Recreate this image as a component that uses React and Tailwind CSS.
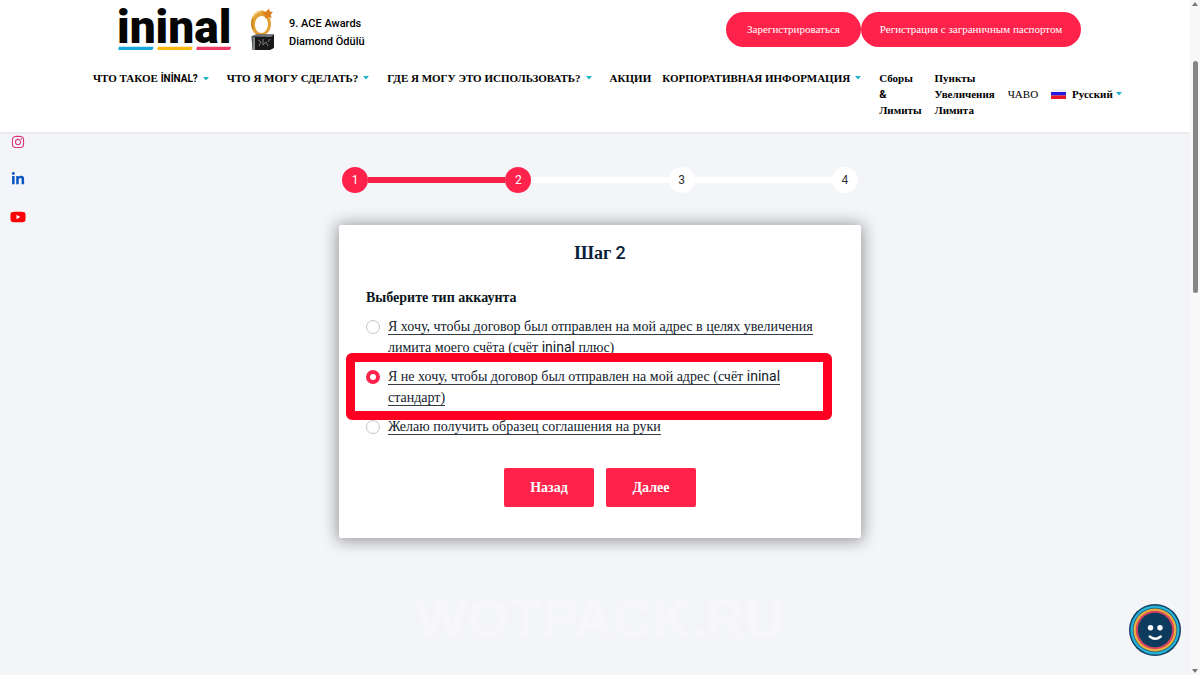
import { useState } from "react";
import { FaInstagram, FaLinkedinIn, FaYoutube } from "react-icons/fa6";

function Latin({ children }) {
  return <span className="font-['Roboto','Liberation_Sans',sans-serif] leading-none">{children}</span>;
}

function Caret() {
  return (
    <svg viewBox="0 0 6 4" className="h-1 w-1.5 shrink-0" aria-hidden="true">
      <path d="M0 0h6L3 3.4z" fill="#1fb5c9" />
    </svg>
  );
}

function Logo() {
  return (
    <svg viewBox="0 0 114 46" className="h-[46px] w-[114px] overflow-visible" role="img" aria-label="ininal">
      <text x="-1" y="37" fontFamily="Roboto, sans-serif" fontWeight="900" fontSize="46" fill="#050505">
        ininal
      </text>
      <path d="M1 40.800h34.500q-.2 3.200-2 3.200H.5q-.5-2 .5-3.200z" fill="#1ba8dc" />
      <path d="M40 40.800h34.500q-.2 3.200-2 3.200H39.500q-.5-2 .5-3.200z" fill="#f9b90f" />
      <path d="M79 40.800h34q-.2 3.200-2 3.200H78.500q-.5-2 .5-3.200z" fill="#ee3e68" />
    </svg>
  );
}

function Trophy() {
  return (
    <svg viewBox="0 0 26 44" className="h-11 w-[26px]" aria-hidden="true">
      <path
        fillRule="evenodd"
        d="M11 2.500C4.500 3 1 9 1 15.500S4.500 27.500 11 27.500 21 22 21 16 17.500 2 11 2.500zM11.500 8c3.800 0 6.500 3.500 6.500 8s-2.700 9-6.700 9S5 21 5 16.500 7.700 8 11.500 8z"
        fill="#e3a035"
      />
      <path d="M3 9q2.500-5 8-5.300" fill="none" stroke="#f7d487" strokeWidth="1.200" />
      <path d="M3 21Q.8 16 2.600 11" fill="none" stroke="#b87718" strokeWidth="1" />
      <path d="M19 .5l.8 3 3.200.5-2.200 2.600.9 3.400-3.400-1.200-3.200 1.700-.3-3.400L12 5.200l3.600-1.300z" fill="#dc7f1e" />
      <path d="M1.500 28.500l4.500-2h18v13.500l-4 2H2.500z" fill="#17191b" />
      <path d="M1.500 28.500l4.500-2h18l-3 2.500z" fill="#70757a" />
      <path d="M2.500 42V29l2.500.3V42z" fill="#85898b" />
      <path d="M8 32l3 2-2 4M13 31v6l3-3 2 4M20 31l-2 3" fill="none" stroke="#8e8478" strokeWidth=".9" />
    </svg>
  );
}

function RussianFlag() {
  return (
    <svg viewBox="0 0 15 10" className="h-2.5 w-[15px] shrink-0" aria-hidden="true">
      <path d="M0 0h15v10H0z" fill="#f0f0f3" />
      <path d="M0 3h15v3.500H0z" fill="#2417e0" />
      <path d="M0 6.500h15V10H0z" fill="#ee1427" />
    </svg>
  );
}

function NavItem({ children, menu }) {
  return (
    <li className={menu ? "pr-[7px]" : ""}>
      <a href="#" className="flex items-center gap-[5px] whitespace-nowrap">
        <span>{children}</span>
        {menu && <Caret />}
      </a>
    </li>
  );
}

function Header() {
  return (
    <header className="h-[134px] border-b-2 border-[#e9ebef] bg-white text-black">
      <div className="flex h-[58px] items-start justify-between pr-[119px] pl-[118px]">
        <div className="flex pt-1.5">
          <a href="#">
            <Logo />
          </a>
          <div className="ml-[18px] pt-0.5">
            <Trophy />
          </div>
          <p className="ml-[13px] pt-[9px] font-['Roboto',sans-serif] text-[11px] leading-[18px] font-medium">
            9. ACE Awards
            <br />
            Diamond Ödülü
          </p>
        </div>
        <div className="flex pt-3 text-[11px] text-white">
          <button type="button" className="h-[35px] w-[135px] rounded-full bg-[#ff234c]">
            Зарегистрироваться
          </button>
          <button type="button" className="h-[35px] w-[220px] rounded-full bg-[#ff234c]">
            Регистрация с заграничным паспортом
          </button>
        </div>
      </div>
      <nav className="flex gap-[11px] pt-3 pl-[93px] text-[11px] leading-[16px] font-bold">
        <ul className="flex gap-[11px]">
          <NavItem menu>
            ЧТО ТАКОЕ <span className="text-[10px]"><Latin>İNİNAL?</Latin></span>
          </NavItem>
          <NavItem menu>ЧТО Я МОГУ СДЕЛАТЬ?</NavItem>
          <NavItem menu>ГДЕ Я МОГУ ЭТО ИСПОЛЬЗОВАТЬ?</NavItem>
          <NavItem>АКЦИИ</NavItem>
          <NavItem menu>КОРПОРАТИВНАЯ ИНФОРМАЦИЯ</NavItem>
        </ul>
        <ul className="flex gap-[13px]">
          <NavItem>
            Сборы
            <br />
            <Latin>&amp;</Latin>
            <br />
            Лимиты
          </NavItem>
          <NavItem>
            Пункты
            <br />
            Увеличения
            <br />
            Лимита
          </NavItem>
          <li className="self-center font-normal">
            <a href="#">ЧАВО</a>
          </li>
          <li className="self-center">
            <button type="button" className="flex items-center font-bold">
              <RussianFlag />
              <span className="mr-[3px] ml-1.5">Русский</span>
              <Caret />
            </button>
          </li>
        </ul>
      </nav>
    </header>
  );
}

function Stepper({ current }) {
  return (
    <ol className="flex items-center font-['Roboto',sans-serif] text-[12px]">
      {[1, 2, 3, 4].map((n) => (
        <li key={n} className={n > 1 ? "flex flex-1 items-center" : "flex items-center"}>
          {n > 1 && <span className={n <= current ? "h-1.5 flex-1 bg-[#f81f49]" : "h-1.5 flex-1 bg-white"} />}
          <span
            className={
              n <= current
                ? "flex size-[26px] items-center justify-center rounded-full bg-[#ff234c] text-white"
                : "flex size-[26px] items-center justify-center rounded-full bg-white text-[#333]"
            }
          >
            {n}
          </span>
        </li>
      ))}
    </ol>
  );
}

function Option({ id, checked, onChange, framed, children }) {
  return (
    <div className="relative flex gap-2">
      <input
        id={id}
        type="radio"
        name="account"
        checked={checked}
        onChange={onChange}
        className="mt-1 size-3.5 shrink-0 appearance-none rounded-full border border-[#c4c7cb] bg-white checked:border-[4px] checked:border-[#ff234c]"
      />
      <label htmlFor={id} className="text-[14px] leading-[21px] text-[#12202b]">
        <span className="border-b border-[#333c44]">{children}</span>
      </label>
      {framed && (
        <div className="pointer-events-none absolute -top-[13px] right-0.5 -bottom-3 -left-5 rounded-md border-[9px] border-[#ff0022]" />
      )}
    </div>
  );
}

function AccountForm() {
  const [account, setAccount] = useState("standard");
  return (
    <form
      onSubmit={(e) => e.preventDefault()}
      className="rounded-xs bg-white px-[27px] pt-4 pb-[31px] shadow-[0_1px_16px_2px_rgba(0,0,0,0.38)]"
    >
      <h1 className="text-center text-[18px] leading-6 font-bold text-[#0a2239]">
        Шаг <span className="font-medium"><Latin>2</Latin></span>
      </h1>
      <fieldset className="mt-[22px]">
        <legend className="mb-2 text-[14px] leading-[21px] font-bold text-[#0b1620]">Выберите тип аккаунта</legend>
        <div className="flex flex-col gap-2">
          <Option id="plus" checked={account === "plus"} onChange={() => setAccount("plus")}>
            Я хочу, чтобы договор был отправлен на мой адрес в целях увеличения лимита моего счёта (счёт{" "}
            <Latin>ininal</Latin> плюс)
          </Option>
          <Option id="standard" framed checked={account === "standard"} onChange={() => setAccount("standard")}>
            Я не хочу, чтобы договор был отправлен на мой адрес (счёт <Latin>ininal</Latin> стандарт)
          </Option>
          <Option id="hand" checked={account === "hand"} onChange={() => setAccount("hand")}>
            Желаю получить образец соглашения на руки
          </Option>
        </div>
      </fieldset>
      <div className="mt-[31px] flex justify-center gap-3 text-[14px] font-bold text-white">
        <button type="button" className="h-[39px] w-[90px] rounded-xs bg-[#ff234c]">
          Назад
        </button>
        <button type="submit" className="h-[39px] w-[90px] rounded-xs bg-[#ff234c]">
          Далее
        </button>
      </div>
    </form>
  );
}

function ChatFace() {
  return (
    <svg viewBox="0 0 52 52" className="size-[52px]" aria-hidden="true">
      <circle cx="26" cy="26" r="26" fill="#123f62" />
      <circle cx="26" cy="26" r="24.500" fill="#27b3d8" />
      <circle cx="26" cy="26" r="22.300" fill="#1b5f80" />
      <circle cx="26" cy="26" r="21.500" fill="#e9b13c" />
      <circle cx="26" cy="26" r="19.300" fill="#d6455f" />
      <circle cx="26" cy="26" r="17.200" fill="#0d3b5e" />
      <circle cx="21.500" cy="23.800" r="2.700" fill="#fff" />
      <circle cx="31" cy="23.800" r="2.700" fill="#fff" />
      <path d="M20.800 32.500q5.500 4.500 11 0" fill="none" stroke="#fff" strokeWidth="2.400" strokeLinecap="round" />
    </svg>
  );
}

export default function App() {
  return (
    <div className="relative min-h-screen overflow-hidden bg-[#f3f5f9] font-['Liberation_Serif','Times_New_Roman',serif]">
      <Header />
      <aside className="absolute top-[135px] left-[10px] flex flex-col items-center gap-[23px]">
        <a href="#" aria-label="Instagram">
          <FaInstagram className="size-3.5 text-[#d9337a]" />
        </a>
        <a href="#" aria-label="LinkedIn">
          <FaLinkedinIn className="size-3.5 text-[#0b57c0]" />
        </a>
        <a href="#" aria-label="YouTube">
          <FaYoutube className="size-4 text-[#fb0007]" />
        </a>
      </aside>
      <main className="mx-auto flex max-w-[522px] flex-col gap-8 pt-[33px]">
        <div className="px-[3px]">
          <Stepper current={2} />
        </div>
        <AccountForm />
      </main>
      <p className="mt-[50px] text-center font-['Liberation_Sans',sans-serif] text-[54px] leading-[60px] font-bold text-[#f7f7fb] select-none">
        WOTPACK.RU
      </p>
      <button type="button" aria-label="Чат" className="absolute right-[19px] bottom-[19px] rounded-full">
        <ChatFace />
      </button>
      <div className="absolute inset-y-0 right-0 flex w-2.5 flex-col items-center justify-between bg-[#f8f8f9]" aria-hidden="true">
        <svg viewBox="0 0 8 8" className="size-2">
          <path d="M1 6l3-4 3 4z" fill="#777" />
        </svg>
        <div className="mt-[53px] h-[232px] w-[5px] rounded-full bg-[#858585]" />
        <div className="flex-1" />
        <svg viewBox="0 0 8 8" className="size-2">
          <path d="M1 2l3 4 3-4z" fill="#777" />
        </svg>
      </div>
    </div>
  );
}
